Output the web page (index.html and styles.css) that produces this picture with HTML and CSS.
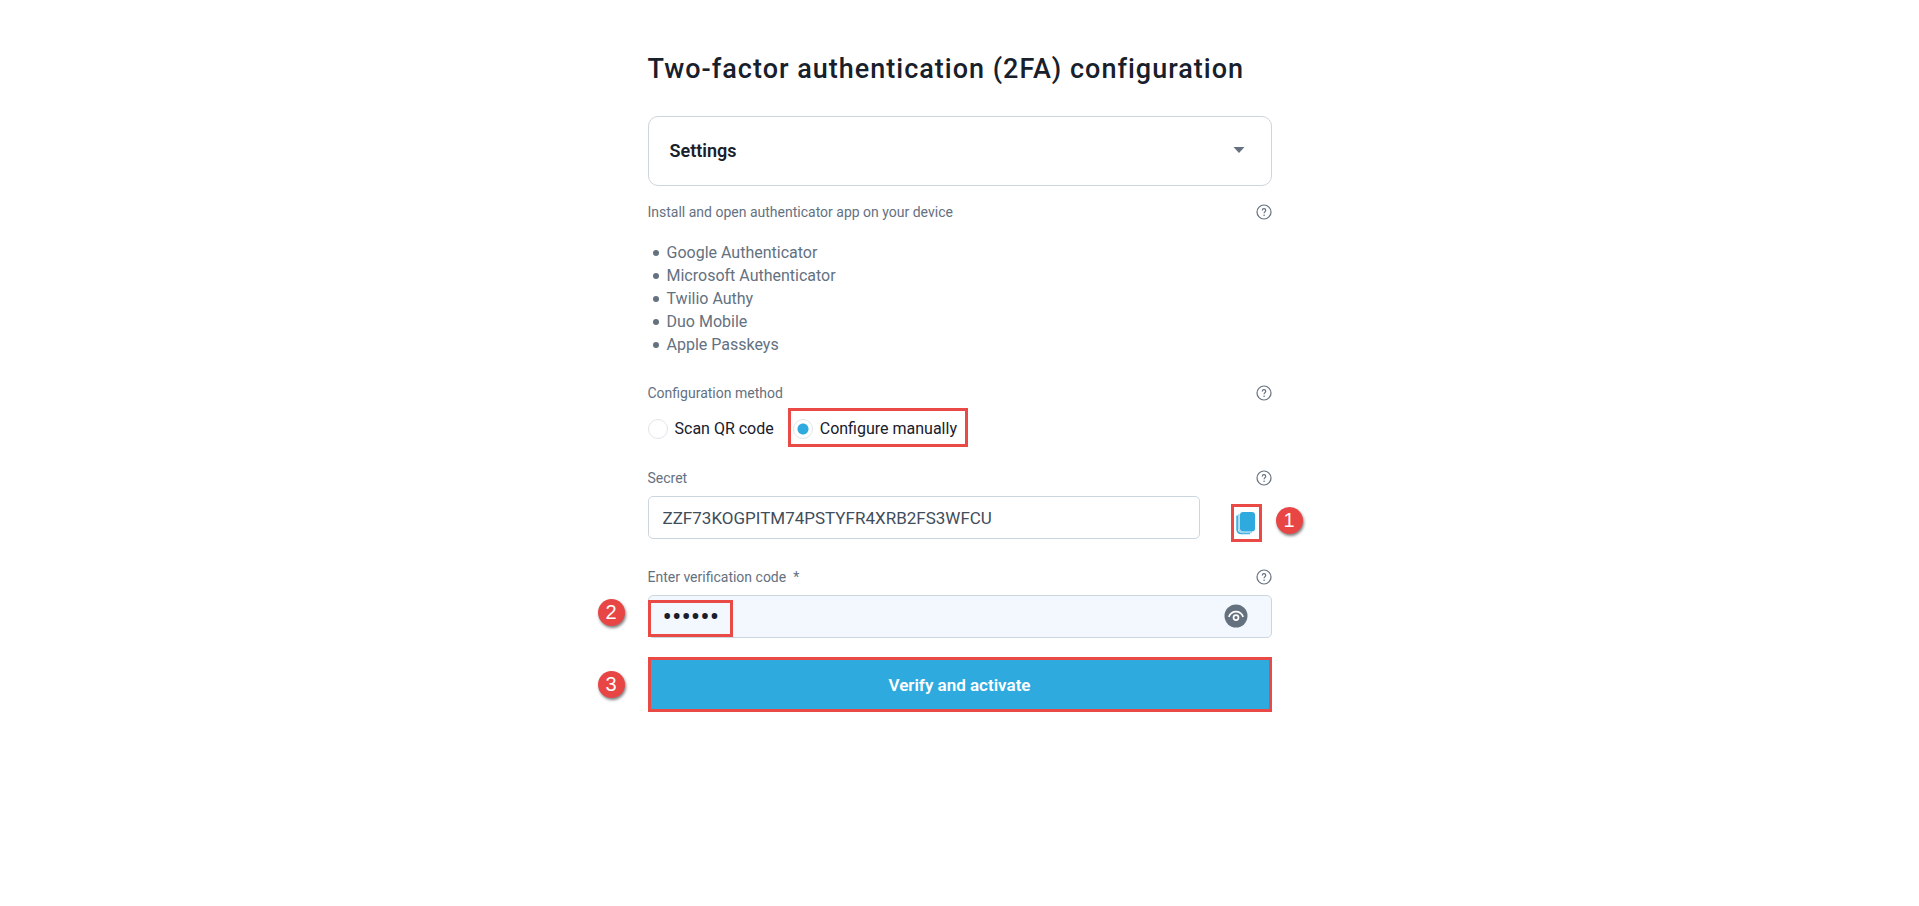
FILE: index.html
```html
<!DOCTYPE html>
<html lang="en">
<head>
    <meta charset="UTF-8">
    <meta name="viewport" content="width=device-width, initial-scale=1.0">
    <title>Two-factor authentication (2FA) configuration</title>
    <link rel="stylesheet" href="styles.css">
</head>
<body>

<svg class="sprite" aria-hidden="true">
    <symbol id="icon-help" viewBox="0 0 16 16">
        <circle cx="8" cy="8" r="7" fill="none" stroke="#64717f" stroke-width="1.2"/>
        <path d="M6.300 6.500C6.300 5.300 7 4.700 8 4.700s1.700.7 1.700 1.600c0 1.300-1.600 1.400-1.600 2.900" fill="none" stroke="#64717f" stroke-width="1.2"/>
        <circle cx="8.100" cy="11.200" r=".8" fill="#64717f"/>
    </symbol>
</svg>

<form class="container">
    <h1 class="title">Two-factor authentication (2FA) configuration</h1>

    <button class="settings" type="button">
        <span>Settings</span>
        <svg class="caret" width="12" height="8" viewBox="0 0 12 8"><path d="M.5 0h11L6 6z" fill="#64717f"/></svg>
    </button>

    <div class="field apps">
        <div class="label-row">
            <span class="label">Install and open authenticator app on your device</span>
            <button class="help" type="button" aria-label="Help"><svg width="16" height="16"><use href="#icon-help"/></svg></button>
        </div>
        <ul class="app-list">
            <li>Google Authenticator</li>
            <li>Microsoft Authenticator</li>
            <li>Twilio Authy</li>
            <li>Duo Mobile</li>
            <li>Apple Passkeys</li>
        </ul>
    </div>

    <div class="field methods">
        <div class="label-row">
            <span class="label">Configuration method</span>
            <button class="help" type="button" aria-label="Help"><svg width="16" height="16"><use href="#icon-help"/></svg></button>
        </div>
        <div class="radios">
            <label class="radio-label" for="qr">
                <input class="radio" type="radio" name="method" id="qr">Scan QR code
            </label>
            <label class="radio-label marked" for="manual">
                <input class="radio" type="radio" name="method" id="manual" checked>Configure manually
                <span class="mark mark-radio"></span>
            </label>
        </div>
    </div>

    <div class="field secret">
        <div class="label-row">
            <label class="label" for="secret">Secret</label>
            <button class="help" type="button" aria-label="Help"><svg width="16" height="16"><use href="#icon-help"/></svg></button>
        </div>
        <div class="secret-row">
            <input class="input" type="text" id="secret" value="ZZF73KOGPITM74PSTYFR4XRB2FS3WFCU" readonly>
            <button class="copy marked" type="button" aria-label="Copy">
                <svg width="20" height="24" viewBox="0 0 20 24">
                    <path d="M1.100 4.500v14a4 4 0 0 0 4 4H14" fill="none" stroke="#2faadf" stroke-width="1.600"/>
                    <path d="M2.900 3v14.500a4 4 0 0 0 4 4H16" fill="none" stroke="#9bd5ef" stroke-width="1.600"/>
                    <rect x="4" y="1" width="15" height="19.500" rx="3" fill="#2faadf"/>
                </svg>
                <span class="mark mark-copy"></span>
                <span class="badge badge-right">1</span>
            </button>
        </div>
    </div>

    <div class="field code">
        <div class="label-row">
            <label class="label" for="code">Enter verification code &nbsp;*</label>
            <button class="help" type="button" aria-label="Help"><svg width="16" height="16"><use href="#icon-help"/></svg></button>
        </div>
        <div class="marked">
            <input class="input filled" type="password" id="code" value="482913">
            <button class="eye" type="button" aria-label="Show code">
                <svg width="24" height="24" viewBox="0 0 24 24">
                    <circle cx="12" cy="12" r="11.500" fill="#64717f"/>
                    <path d="M4.800 12.800C6.300 9.400 9 7.600 12 7.600s5.700 1.800 7.200 5.200" fill="none" stroke="#fff" stroke-width="1.800"/>
                    <circle cx="12" cy="13.600" r="2.500" fill="none" stroke="#fff" stroke-width="1.700"/>
                </svg>
            </button>
            <span class="mark mark-code"></span>
            <span class="badge badge-left badge-code">2</span>
        </div>
    </div>

    <div class="marked submit">
        <button class="btn" type="submit">Verify and activate</button>
        <span class="badge badge-left">3</span>
    </div>
</form>

</body>
</html>
```
FILE: styles.css
```css
* {
    box-sizing: border-box;
}
body {
    margin: 0;
    background: #fff;
    color: #17202b;
    font: 16px/24px Roboto, sans-serif;
}
button {
    padding: 0;
    border: none;
    background: none;
    font: inherit;
    color: inherit;
    cursor: pointer;
}
svg {
    display: block;
}
.sprite {
    position: absolute;
    width: 0;
    height: 0;
}
.container {
    max-width: 624px;
    margin: 0 auto;
    padding: 49px 0;
}
.title {
    margin: 0 0 27px;
    font-size: 27px;
    line-height: 40px;
    font-weight: 500;
    letter-spacing: 1px;
}
.settings {
    display: flex;
    justify-content: space-between;
    align-items: center;
    width: 100%;
    padding: 22px 26px 22px 21px;
    border: 1px solid #ccd6df;
    border-radius: 10px;
    font-size: 18px;
    font-weight: 600;
}
.field {
    margin-top: 16px;
}
.label-row {
    display: flex;
    justify-content: space-between;
    align-items: center;
    height: 20px;
}
.label {
    color: #64717f;
    font-size: 14px;
    line-height: 20px;
}
.app-list {
    margin: 19px 0 0;
    padding-left: 5px;
    color: #64717f;
    line-height: 23px;
    list-style: none;
}
.app-list li {
    display: flex;
    align-items: center;
    gap: 8px;
}
.app-list li::before {
    content: "";
    width: 6px;
    height: 6px;
    border-radius: 50%;
    background: #64717f;
}
.methods {
    margin-top: 27px;
}
.radios {
    display: flex;
    gap: 19px;
    margin-top: 14px;
}
.radio-label {
    display: flex;
    align-items: center;
    gap: 7px;
}
.radio {
    appearance: none;
    width: 20px;
    height: 20px;
    margin: 0;
    border: 1px solid #e1e5ea;
    border-radius: 50%;
}
.radio:checked {
    background: radial-gradient(circle, #2faadf 5px, #fff 6px);
}
.secret {
    margin-top: 27px;
}
.code {
    margin-top: 28px;
}
.secret-row {
    display: flex;
    align-items: flex-start;
    gap: 36px;
    padding-right: 16px;
}
.input {
    display: block;
    width: 100%;
    height: 43px;
    margin-top: 8px;
    padding: 0 14px;
    border: 1px solid #ccd6df;
    border-radius: 5px;
    background: #fff;
    color: #414d5a;
    font: 17px/24px Roboto, sans-serif;
}
.filled {
    background: #f3f7fe;
    color: #17202b;
    font-size: 28px;
}
.copy {
    margin-top: 23px;
}
.eye {
    position: absolute;
    top: 9px;
    right: 24px;
}
.submit {
    margin-top: 19px;
}
.btn {
    width: 100%;
    height: 55px;
    border: 3px solid #ea4a46;
    background: #2faadf;
    color: #fff;
    font-size: 17px;
    font-weight: 600;
}

/* callouts */
.marked {
    position: relative;
}
.mark {
    position: absolute;
    border: 3px solid #ea4a46;
    pointer-events: none;
}
.mark-radio {
    inset: -9px -11px -6px -5px;
}
.mark-copy {
    inset: -7px -6px -7px -5px;
}
.mark-code {
    top: 5px;
    left: 0;
    width: 85px;
    height: 37px;
}
.badge {
    position: absolute;
    top: 50%;
    width: 27px;
    height: 27px;
    margin-top: -14px;
    border-radius: 50%;
    background: #e84545;
    box-shadow: 1px 2px 3px rgba(0, 0, 0, 0.5);
    color: #fff;
    font: 20px/27px "Liberation Sans", sans-serif;
    text-align: center;
}
.badge-left {
    left: -50px;
}
.badge-right {
    top: 10px;
    left: 40px;
}
.badge-code {
    top: 18px;
}
```
